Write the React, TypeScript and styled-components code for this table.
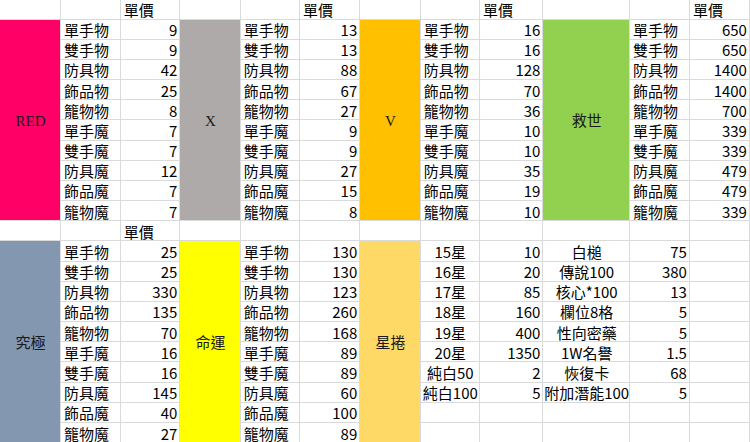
import React from "react";
import styled, { createGlobalStyle } from "styled-components";

const GlobalStyle = createGlobalStyle`
  html, body {
    margin: 0;
    padding: 0;
    background: #fff;
  }
  body {
    overflow: hidden;
  }
`;

const Sheet = styled.div`
  display: grid;
  grid-template-columns: 61px 59.7px 59.6px 60.4px 59.3px 60.3px 60.4px 59.3px 63.5px 86.5px 60px 60px;
  grid-template-rows: 19.5px repeat(21, 20.18px);
  width: 750px;
  height: 442px;
  overflow: hidden;
  background: #fff;
  color: #000;
  font-family: "Liberation Sans Narrow", "Noto Sans CJK TC", sans-serif;
  font-size: 15px;
`;

type Align = "left" | "right" | "center";

interface CellProps {
  $col: number;
  $row: number;
  $span?: number;
  $align?: Align;
  $bg?: string;
}

const Cell = styled.div<CellProps>`
  grid-column: ${(p) => p.$col};
  grid-row: ${(p) => p.$row} / span ${(p) => p.$span ?? 1};
  box-sizing: border-box;
  display: flex;
  align-items: center;
  justify-content: ${(p) =>
    p.$align === "right" ? "flex-end" : p.$align === "center" ? "center" : "flex-start"};
  padding: 1px 2px 0 3px;
  border-right: 1px solid #dadada;
  border-bottom: 1px solid #dadada;
  background: ${(p) => p.$bg ?? "transparent"};
  white-space: nowrap;
  line-height: 1;
`;

const Label = styled(Cell)`
  padding-top: 3px;
  font-family: "Liberation Serif", "Noto Sans CJK TC", serif;
  color: #1a1a1a;
`;

const ITEMS = ["單手物", "雙手物", "防具物", "飾品物", "籠物物", "單手魔", "雙手魔", "防具魔", "飾品魔", "籠物魔"];

interface Block {
  label: string;
  bg: string;
  col: number;
  row: number;
  prices: string[];
}

const blocks: Block[] = [
  { label: "RED", bg: "#FF0066", col: 1, row: 2, prices: ["9", "9", "42", "25", "8", "7", "7", "12", "7", "7"] },
  { label: "X", bg: "#AEAAAA", col: 4, row: 2, prices: ["13", "13", "88", "67", "27", "9", "9", "27", "15", "8"] },
  { label: "V", bg: "#FFC000", col: 7, row: 2, prices: ["16", "16", "128", "70", "36", "10", "10", "35", "19", "10"] },
  { label: "救世", bg: "#92D050", col: 10, row: 2, prices: ["650", "650", "1400", "1400", "700", "339", "339", "479", "479", "339"] },
  { label: "究極", bg: "#8497B0", col: 1, row: 13, prices: ["25", "25", "330", "135", "70", "16", "16", "145", "40", "27"] },
  { label: "命運", bg: "#FFFF00", col: 4, row: 13, prices: ["130", "130", "123", "260", "168", "89", "89", "60", "100", "89"] },
];

const scrolls = [
  ["15星", "10", "白槌", "75"],
  ["16星", "20", "傳說100", "380"],
  ["17星", "85", "核心*100", "13"],
  ["18星", "160", "欄位8格", "5"],
  ["19星", "400", "性向密藥", "5"],
  ["20星", "1350", "1W名譽", "1.5"],
  ["純白50", "2", "恢復卡", "68"],
  ["純白100", "5", "附加潛能100", "5"],
];

const headers: [number, number][] = [
  [1, 3],
  [1, 6],
  [1, 9],
  [1, 12],
  [12, 3],
];

function buildSheet() {
  const text: Record<string, { t: string; a: Align }> = {};
  const covered = new Set<string>();
  const labels: { label: string; bg: string; col: number; row: number }[] = [];

  headers.forEach(([r, c]) => (text[`${r}-${c}`] = { t: "單價", a: "left" }));

  blocks.forEach((b) => {
    labels.push(b);
    ITEMS.forEach((name, i) => {
      text[`${b.row + i}-${b.col + 1}`] = { t: name, a: "left" };
      text[`${b.row + i}-${b.col + 2}`] = { t: b.prices[i], a: "right" };
    });
  });

  labels.push({ label: "星捲", bg: "#FFD966", col: 7, row: 13 });
  scrolls.forEach((s, i) => {
    text[`${13 + i}-8`] = { t: s[0], a: "center" };
    text[`${13 + i}-9`] = { t: s[1], a: "right" };
    text[`${13 + i}-10`] = { t: s[2], a: "center" };
    text[`${13 + i}-11`] = { t: s[3], a: "right" };
  });

  labels.forEach((l) => {
    for (let i = 0; i < 10; i++) covered.add(`${l.row + i}-${l.col}`);
  });

  return { text, covered, labels };
}

function App() {
  const { text, covered, labels } = buildSheet();
  const cells: React.ReactNode[] = [];

  for (let r = 1; r <= 22; r++) {
    for (let c = 1; c <= 12; c++) {
      const key = `${r}-${c}`;
      if (covered.has(key)) continue;
      const v = text[key];
      cells.push(
        <Cell key={key} $row={r} $col={c} $align={v?.a}>
          {v?.t}
        </Cell>
      );
    }
  }

  return (
    <>
      <GlobalStyle />
      <Sheet>
        {cells}
        {labels.map((l) => (
          <Label key={l.label} $row={l.row} $col={l.col} $span={10} $align="center" $bg={l.bg}>
            {l.label}
          </Label>
        ))}
      </Sheet>
    </>
  );
}

export default App;
